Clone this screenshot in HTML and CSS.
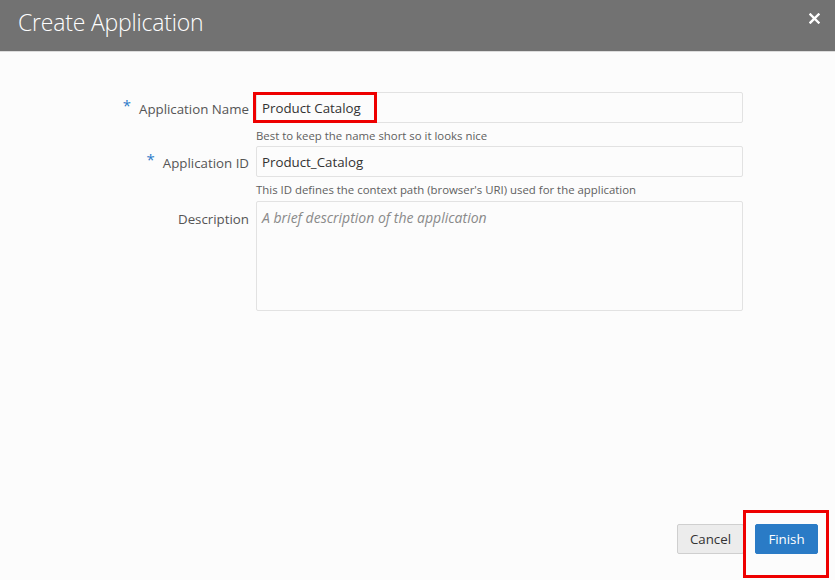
FILE: index.html
```html
<!DOCTYPE html>
<html>
<head>
<meta charset="utf-8">
<link rel="stylesheet" href="styles.css">
</head>
<body>
<div class="dialog">
  <header class="dialog-header">
    <h1 class="dialog-title">Create Application</h1>
    <button class="close-btn" aria-label="Close">
      <svg width="11" height="11" viewBox="0 0 11 11"><path d="M1.5 1.5 L9.5 9.5 M9.5 1.5 L1.5 9.5" stroke="#fff" stroke-width="2.4" stroke-linecap="square"/></svg>
    </button>
  </header>
  <main class="dialog-body">
    <div class="form">
      <label class="label"><span class="req">*</span>Application Name</label>
      <div class="field">
        <div class="input highlight-wrap"><span class="value">Product Catalog</span><span class="highlight"></span></div>
        <div class="help">Best to keep the name short so it looks nice</div>
      </div>
      <label class="label"><span class="req">*</span>Application ID</label>
      <div class="field">
        <div class="input"><span class="value">Product_Catalog</span></div>
        <div class="help help-last">This ID defines the context path (browser's URI) used for the application</div>
      </div>
      <label class="label label-desc">Description</label>
      <div class="field">
        <div class="textarea"><span class="placeholder">A brief description of the application</span></div>
      </div>
    </div>
  </main>
  <footer class="dialog-footer">
    <button class="btn btn-cancel">Cancel</button>
    <button class="btn btn-primary">Finish<span class="highlight-btn"></span></button>
  </footer>
</div>
</body>
</html>
```
FILE: styles.css
```css
* { box-sizing: border-box; }
html, body { margin: 0; padding: 0; }
body {
  background: #fcfcfc;
  font-family: "Open Sans", "Noto Sans", sans-serif;
  width: 835px;
  height: 580px;
  overflow: hidden;
}
.dialog {
  display: flex;
  flex-direction: column;
  height: 580px;
}
.dialog-header {
  height: 52px;
  background: #727272;
  border-bottom: 1px solid #dcdcdc;
  display: flex;
  align-items: center;
  justify-content: space-between;
  padding: 0 15px 0 18px;
}
.dialog-title {
  margin: 0;
  font-weight: 300;
  font-size: 23px;
  color: #ffffff;
  letter-spacing: -0.2px;
  position: relative;
  top: -4px;
}
.close-btn {
  background: none;
  border: 0;
  padding: 0;
  width: 11px;
  height: 11px;
  display: flex;
  position: relative;
  top: -7px;
}
.dialog-body {
  flex: 1;
  padding-top: 40px;
}
.form {
  display: grid;
  grid-template-columns: 249px 487px;
  column-gap: 7px;
  row-gap: 0;
}
.label {
  text-align: right;
  font-size: 13.3px;
  color: #555555;
  padding-top: 7px;
  line-height: 18px;
}
.label-desc { padding-top: 9px; }
.req {
  color: #2d7bc9;
  font-size: 15px;
  margin-right: 8px;
  position: relative;
  top: -3px;
}
.field {
  display: flex;
  flex-direction: column;
  margin-bottom: 1px;
}
.input {
  height: 31px;
  border: 1px solid #e2e2e2;
  border-radius: 2px;
  background: #fcfcfc;
  padding: 0 5px;
  display: flex;
  align-items: center;
  font-size: 13.3px;
  color: #333333;
}
.highlight-wrap { position: relative; }
.highlight {
  position: absolute;
  left: -4px;
  top: -1px;
  width: 124px;
  height: 31px;
  border: 3px solid #ee0000;
}
.help {
  font-size: 11.4px;
  color: #5f5f5f;
  line-height: 15px;
  padding-top: 5px;
  height: 22px;
}
.help-last { height: 23px; }
.textarea {
  height: 110px;
  border: 1px solid #e2e2e2;
  border-radius: 2px;
  background: #fcfcfc;
  padding: 6px 5px;
  font-size: 14px;
}
.placeholder {
  font-style: italic;
  color: #8a8a8a;
}
.dialog-footer {
  display: flex;
  justify-content: flex-end;
  gap: 11px;
  padding: 0 17px 26px 0;
}
.btn {
  height: 30px;
  border-radius: 2px;
  font-family: "Open Sans", "Noto Sans", sans-serif;
  font-size: 13.3px;
  padding: 0;
}
.btn-cancel {
  width: 67px;
  background: #ececec;
  border: 1px solid #cfcfcf;
  color: #333333;
}
.btn-primary {
  width: 63px;
  background: #2a7bc6;
  border: 1px solid #2a7bc6;
  color: #ffffff;
  position: relative;
}
.highlight-btn {
  position: absolute;
  left: -13px;
  top: -15px;
  width: 86px;
  height: 68px;
  border: 3px solid #ee0000;
}
```
